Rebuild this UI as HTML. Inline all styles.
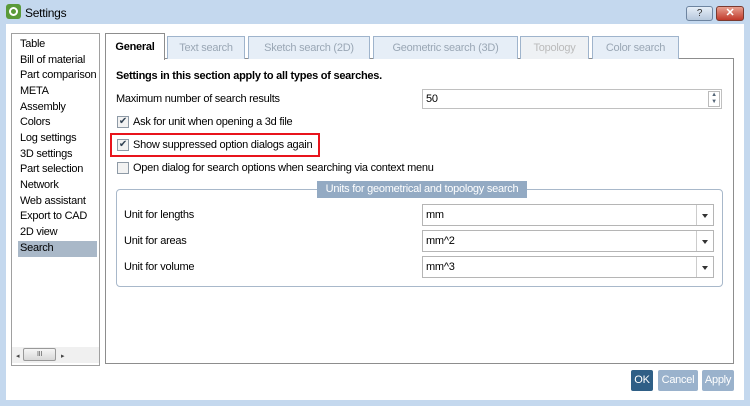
<!DOCTYPE html><html><head><style>
*{margin:0;padding:0;box-sizing:border-box}
body{width:750px;height:406px;background:#c4d8ee;font-family:"Liberation Sans",sans-serif;font-size:11px;letter-spacing:-0.25px;color:#000;position:relative;overflow:hidden}
.a{position:absolute}
.t{white-space:nowrap}
.tab{position:absolute;top:36px;height:23px;border:1px solid #9fb4cc;border-bottom:none;background:#e6eef7;color:#9aa7b5;text-align:center;line-height:22px;font-size:11px}
.cb{position:absolute;width:12px;height:12px;border:1px solid #8e9aa6;background:#f2f2f2;font-size:10px;line-height:10px;text-align:center;color:#345}
.combo{position:absolute;left:422px;width:292px;height:22px;border:1px solid #b5b5b5;background:#fff;padding-left:3px;line-height:20px}
.combo:after{content:"";position:absolute;right:0;top:0;width:16px;height:20px;border-left:1px solid #ccc}
.combo i{position:absolute;right:5px;top:9px;border:3px solid transparent;border-top:4px solid #333;z-index:2}
.btn{position:absolute;top:370px;height:21px;color:#fff;font-size:11px;line-height:21px;text-align:center;border-radius:2px}
</style></head><body>
<div class="a" style="left:6px;top:4px;width:15px;height:15px;border-radius:3px;background:#5a9a3a"><div class="a" style="left:3px;top:3px;width:9px;height:9px;border-radius:50%;border:2px solid #fff"></div></div>
<div class="a t" style="left:25px;top:6px;font-size:12px">Settings</div>
<div class="a" style="left:686px;top:6px;width:27px;height:15px;border:1px solid #6d84a0;border-radius:3px;background:linear-gradient(#e6eef8,#b7c8dc);text-align:center;font-size:10px;line-height:13px;color:#333">?</div>
<div class="a" style="left:716px;top:6px;width:28px;height:15px;border:1px solid #7a3a30;border-radius:3px;background:linear-gradient(#e8a090,#c0392b);text-align:center;font-size:11px;line-height:13px;color:#fff;font-weight:bold">✕</div>
<div class="a" style="left:6px;top:24px;width:738px;height:376px;background:#fff"></div>
<div class="a" style="left:11px;top:33px;width:89px;height:333px;border:1px solid #a0a0a0;background:#fff"></div>
<div class="a" style="left:18px;top:241px;width:79px;height:16px;background:#a9b8c8"></div>
<div class="a" style="left:20px;top:37px;line-height:15.65px">Table<br>Bill of material<br>Part comparison<br>META<br>Assembly<br>Colors<br>Log settings<br>3D settings<br>Part selection<br>Network<br>Web assistant<br>Export to CAD<br>2D view<br>Search</div>
<div class="a" style="left:12px;top:347px;width:87px;height:16px;background:#f0f0f0"></div>
<div class="a" style="left:16px;top:352px;font-size:7px;color:#444">◂</div>
<div class="a" style="left:23px;top:348px;width:33px;height:13px;border:1px solid #999;border-radius:2px;background:linear-gradient(#f6f6f6,#d8d8d8);font-size:7px;text-align:center;line-height:11px;color:#555">III</div>
<div class="a" style="left:61px;top:352px;font-size:7px;color:#444">▸</div>
<div class="a" style="left:105px;top:58px;width:629px;height:306px;border:1px solid #8d8d8d;background:#fff"></div>
<div class="tab" style="left:105px;top:33px;width:60px;height:27px;background:#fff;color:#000;font-weight:bold;border-color:#8d8d8d;line-height:26px">General</div>
<div class="tab" style="left:167px;width:78px">Text search</div>
<div class="tab" style="left:248px;width:122px">Sketch search (2D)</div>
<div class="tab" style="left:373px;width:145px">Geometric search (3D)</div>
<div class="tab" style="left:520px;width:69px;color:#bbb;background:#eef1f4">Topology</div>
<div class="tab" style="left:592px;width:87px">Color search</div>
<div class="a t" style="left:116px;top:70px;font-weight:bold">Settings in this section apply to all types of searches.</div>
<div class="a t" style="left:116px;top:93px">Maximum number of search results</div>
<div class="a" style="left:422px;top:89px;width:300px;height:20px;border:1px solid #c0c0c0;padding-left:3px;line-height:18px">50</div>
<div class="a" style="left:708px;top:91px;width:12px;height:16px;border:1px solid #bbb;font-size:6px;line-height:7px;text-align:center;color:#567">▲<br>▼</div>
<div class="cb" style="left:117px;top:116px">✔</div><div class="a t" style="left:133px;top:116px">Ask for unit when opening a 3d file</div>
<div class="a" style="left:110px;top:133px;width:210px;height:24px;border:2px solid #e8141c"></div>
<div class="cb" style="left:117px;top:139px">✔</div><div class="a t" style="left:133px;top:139px">Show suppressed option dialogs again</div>
<div class="cb" style="left:117px;top:162px"></div><div class="a t" style="left:133px;top:162px">Open dialog for search options when searching via context menu</div>
<div class="a" style="left:116px;top:189px;width:607px;height:98px;border:1px solid #a8b8ca;border-radius:4px"></div>
<div class="a t" style="left:317px;top:181px;width:210px;height:17px;background:#93aac3;color:#fff;text-align:center;line-height:17px">Units for geometrical and topology search</div>
<div class="a t" style="left:124px;top:209px">Unit for lengths</div>
<div class="a t" style="left:124px;top:235px">Unit for areas</div>
<div class="a t" style="left:124px;top:261px">Unit for volume</div>
<div class="combo" style="top:204px">mm<i></i></div>
<div class="combo" style="top:230px">mm^2<i></i></div>
<div class="combo" style="top:256px">mm^3<i></i></div>
<div class="btn" style="left:631px;width:22px;background:#2f5f86">OK</div>
<div class="btn" style="left:658px;width:40px;background:#9ab2cc">Cancel</div>
<div class="btn" style="left:702px;width:32px;background:#9ab2cc">Apply</div>
</body></html>
